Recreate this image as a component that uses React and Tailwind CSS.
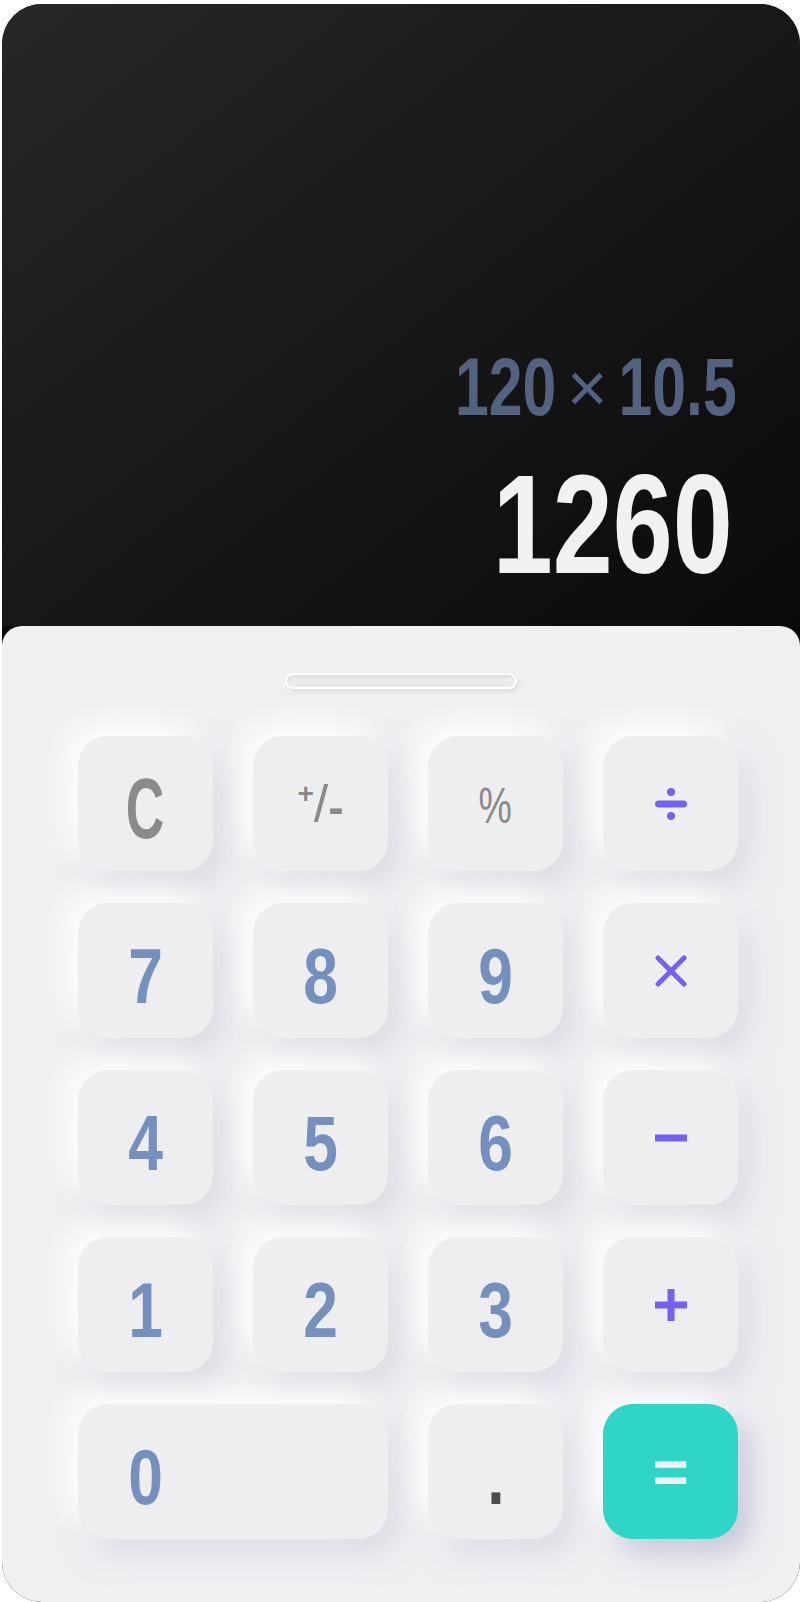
import React from 'react';

const sans = "font-['Liberation_Sans',Arial,sans-serif]";

// neumorphic key
const Key = ({ children, wide, accent }) => {
  const base =
    'h-[135px] rounded-[30px] flex items-center ' +
    (wide ? 'col-span-2 justify-start ' : 'justify-center ');
  const skin = accent
    ? 'bg-[#2fd5c6] shadow-[-12px_-12px_28px_rgba(255,255,255,0.9),12px_14px_30px_rgba(150,152,185,0.5)]'
    : 'bg-[#eeeef1] shadow-[-12px_-12px_28px_rgba(255,255,255,0.9),12px_14px_30px_rgba(196,196,212,0.5)]';
  return <div className={base + skin}>{children}</div>;
};

const Num = ({ children, color = 'text-[#7690be]' }) => (
  <span className={`${sans} font-bold text-[78px] leading-none pt-[11px] scale-x-[0.8] ${color}`}>{children}</span>
);

const Divide = () => (
  <svg width="32" height="32" viewBox="0 0 32 32" fill="#7561f0">
    <circle cx="16" cy="4" r="4" />
    <rect x="0" y="12.5" width="32" height="7" rx="3.5" />
    <circle cx="16" cy="28" r="4" />
  </svg>
);

const Times = () => (
  <svg width="32" height="32" viewBox="0 0 32 32" stroke="#7561f0" strokeWidth="5" strokeLinecap="round">
    <line x1="3" y1="3" x2="29" y2="29" />
    <line x1="29" y1="3" x2="3" y2="29" />
  </svg>
);

const Minus = () => (
  <svg width="32" height="32" viewBox="0 0 32 32" fill="#7561f0">
    <rect x="0" y="12.5" width="32" height="7" />
  </svg>
);

const Plus = () => (
  <svg width="32" height="32" viewBox="0 0 32 32" fill="#7561f0">
    <rect x="0" y="12.5" width="32" height="7" />
    <rect x="12.5" y="0" width="7" height="32" />
  </svg>
);

export default function App() {
  return (
    <div className="bg-white pt-[4px] pl-[2px] w-[800px] h-[1602px] overflow-hidden">
      <div className="w-[798px] h-[1598px] rounded-[40px] overflow-hidden bg-[#0b0b0b] flex flex-col">
        {/* Display */}
        <div className="h-[622px] shrink-0 bg-linear-to-br from-[#272727] to-[#0a0a0a] flex flex-col items-end justify-end pr-[63px] pb-[31px]">
          <div className={`${sans} font-bold text-[81px] leading-none text-[#53627f] mb-[26px] flex items-center scale-x-[0.75] origin-right`}>
            <span>120</span>
            <span className="inline-block font-normal text-[70px] mx-[21px] scale-x-[1.333]">×</span>
            <span>10.5</span>
          </div>
          <div className={`${sans} font-bold text-[141px] leading-none text-[#f1f1f3] mr-[4px] scale-x-[0.765] origin-right`}>1260</div>
        </div>

        {/* Keypad */}
        <div className="flex-1 bg-[#f0f0f3] rounded-t-[20px] pt-[47px]">
          <div className="mx-auto w-[232px] h-[16px] rounded-full bg-[#ebebee] border-2 border-white shadow-[inset_1px_2px_3px_rgba(0,0,0,0.06),2px_3px_5px_rgba(0,0,0,0.08)]" />

          <div className="mt-[47px] pl-[76px] grid grid-cols-[repeat(4,135px)] gap-x-[40px] gap-y-[32px]">
            <Key>
              <span className={`${sans} font-bold text-[86px] leading-none pt-[9px] scale-x-[0.62] text-[#8a8a8a]`}>C</span>
            </Key>
            <Key>
              <span className={`${sans} text-[#8a8a8a] leading-none flex items-center`}>
                <span className="text-[28px] font-bold relative -top-[10px]">+</span>
                <span className="text-[52px]">/</span>
                <span className="text-[46px] font-bold relative top-[3px]">-</span>
              </span>
            </Key>
            <Key><span className={`${sans} text-[50px] leading-none text-[#8a8a8a] pt-[4px] scale-x-[0.75]`}>%</span></Key>
            <Key><Divide /></Key>

            <Key><Num>7</Num></Key>
            <Key><Num>8</Num></Key>
            <Key><Num>9</Num></Key>
            <Key><Times /></Key>

            <Key><Num>4</Num></Key>
            <Key><Num>5</Num></Key>
            <Key><Num>6</Num></Key>
            <Key><Minus /></Key>

            <Key><Num>1</Num></Key>
            <Key><Num>2</Num></Key>
            <Key><Num>3</Num></Key>
            <Key><Plus /></Key>

            <Key wide>
              <div className="w-[135px] flex justify-center"><Num>0</Num></div>
            </Key>
            <Key><Num color="text-[#4a4a4c]">.</Num></Key>
            <Key accent>
              <span className={`${sans} font-bold text-[62px] leading-none text-[#f2f2f4]`}>=</span>
            </Key>
          </div>
        </div>
      </div>
    </div>
  );
}
